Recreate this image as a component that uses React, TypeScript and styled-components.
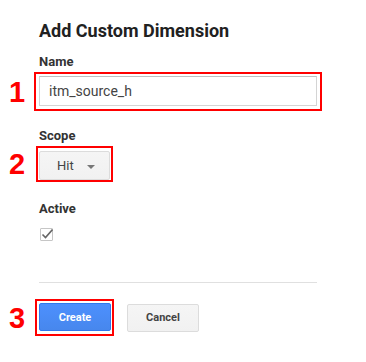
import styled, { createGlobalStyle } from "styled-components";

const GlobalStyle = createGlobalStyle`
  body {
    margin: 0;
    background: #fff;
    font-family: Roboto, "Liberation Sans", Arial, sans-serif;
  }
`;

const Page = styled.div`
  width: 366px;
  height: 362px;
  padding-top: 21px;
  box-sizing: border-box;
`;

const Title = styled.h2`
  margin: 0 0 0 39px;
  font-size: 18px;
  line-height: 20px;
  font-weight: 700;
  color: #212121;
`;

const Label = styled.div<{ $top: number }>`
  margin: ${(p) => p.$top}px 0 0 39px;
  font-size: 13px;
  line-height: 16px;
  font-weight: 700;
  color: #333;
`;

const AnnotatedRow = styled.div<{ $top: number }>`
  display: grid;
  grid-template-columns: 34px auto;
  align-items: center;
  justify-content: start;
  margin-top: ${(p) => p.$top}px;
`;

const Marker = styled.span`
  font-family: "Liberation Sans", Arial, sans-serif;
  font-size: 29px;
  font-weight: 700;
  line-height: 28px;
  color: #f00;
  text-align: center;
`;

const RedBox = styled.div<{ $inset: number; $pad: string }>`
  margin-left: ${(p) => p.$inset}px;
  border: 2px solid #f00;
  padding: ${(p) => p.$pad};
  display: flex;
`;

const NameInput = styled.div`
  width: 278px;
  height: 30px;
  box-sizing: border-box;
  border: 1px solid #d4d4d4;
  border-top-color: #c0c0c0;
  padding-left: 9px;
  display: flex;
  align-items: center;
  font-size: 14px;
  color: #444;
`;

const SelectButton = styled.div`
  width: 71px;
  height: 29px;
  box-sizing: border-box;
  border: 1px solid #dcdcdc;
  border-radius: 2px;
  background: linear-gradient(#f5f5f5, #f1f1f1);
  display: flex;
  align-items: center;
  padding-left: 17px;
  gap: 13px;
  font-size: 13px;
  color: #444;
`;

const Caret = styled.span`
  width: 0;
  height: 0;
  border-left: 4px solid transparent;
  border-right: 4px solid transparent;
  border-top: 4px solid #777;
  margin-top: 2px;
`;

const CheckBox = styled.div`
  margin: 11px 0 0 40px;
  width: 13px;
  height: 13px;
  box-sizing: border-box;
  border: 1px solid #c6c6c6;
  border-radius: 1px;
  position: relative;
`;

const CheckMark = styled.svg`
  position: absolute;
  left: -1px;
  top: -2px;
`;

const Divider = styled.hr`
  margin: 41px 0 0 39px;
  width: 278px;
  border: 0;
  border-top: 1px solid #e0e0e0;
`;

const ButtonBar = styled.div`
  display: flex;
  align-items: center;
  gap: 13px;
`;

const Button = styled.button<{ $primary?: boolean }>`
  width: 72px;
  height: 28px;
  box-sizing: border-box;
  border-radius: 2px;
  font-family: Roboto, "Liberation Sans", Arial, sans-serif;
  font-size: 11px;
  font-weight: 700;
  padding: 0;
  border: 1px solid ${(p) => (p.$primary ? "#3079ed" : "#dcdcdc")};
  background: ${(p) =>
    p.$primary ? "linear-gradient(#4d90fe, #4787ed)" : "linear-gradient(#f5f5f5, #f1f1f1)"};
  color: ${(p) => (p.$primary ? "#fff" : "#444")};
`;

export default function App() {
  return (
    <>
      <GlobalStyle />
      <Page>
        <Title>Add Custom Dimension</Title>
        <Label $top={13}>Name</Label>
        <AnnotatedRow $top={2}>
          <Marker>1</Marker>
          <RedBox $inset={0} $pad="2px 3px 3px 3px">
            <NameInput>itm_source_h</NameInput>
          </RedBox>
        </AnnotatedRow>
        <Label $top={17}>Scope</Label>
        <AnnotatedRow $top={2}>
          <Marker>2</Marker>
          <RedBox $inset={2} $pad="3px 1px 0 1px">
            <SelectButton>
              Hit <Caret />
            </SelectButton>
          </RedBox>
        </AnnotatedRow>
        <Label $top={19}>Active</Label>
        <CheckBox>
          <CheckMark width="13" height="13" viewBox="0 0 13 13">
            <path d="M2.5 7.5 L5.5 10.5 L12.5 2.5" fill="none" stroke="#666" strokeWidth="1.6" />
          </CheckMark>
        </CheckBox>
        <Divider />
        <AnnotatedRow $top={16}>
          <Marker>3</Marker>
          <ButtonBar>
            <RedBox $inset={1} $pad="2px 1px 3px 2px">
              <Button $primary>Create</Button>
            </RedBox>
            <Button>Cancel</Button>
          </ButtonBar>
        </AnnotatedRow>
      </Page>
    </>
  );
}
